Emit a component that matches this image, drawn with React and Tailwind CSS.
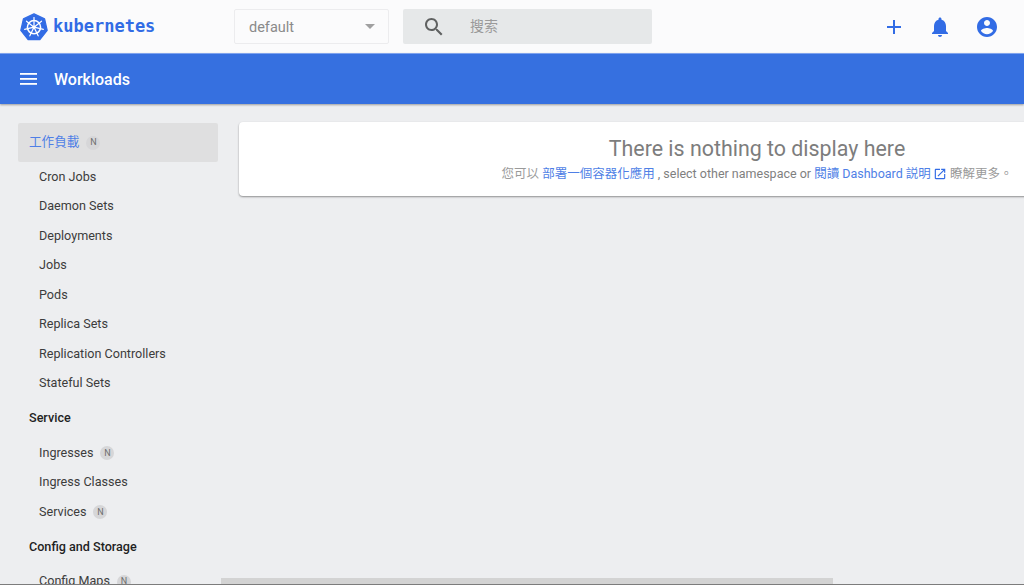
import React from 'react'

const cjk = '"Roboto", "Noto Sans CJK TC", sans-serif'

function KubeLogo() {
    const spokes = [0, 51.4, 102.8, 154.3, 205.7, 257.1, 308.6]
    return (
        <svg width="28" height="28" viewBox="0 0 28 28">
            <path d="M14 0.8 L24.6 5.9 L27.2 17.4 L19.9 26.6 L8.1 26.6 L0.8 17.4 L3.4 5.9 Z" fill="#326ce5" stroke="#326ce5" strokeWidth="1.2" strokeLinejoin="round" />
            <circle cx="14" cy="14.2" r="6.6" fill="none" stroke="#fff" strokeWidth="1.5" />
            <circle cx="14" cy="14.2" r="1.7" fill="#fff" />
            {spokes.map((a) => (
                <line key={a} x1="14" y1="14.2" x2="14" y2="4.6" stroke="#fff" strokeWidth="1.2" strokeLinecap="round" transform={`rotate(${a} 14 14.2)`} />
            ))}
        </svg>
    )
}

function Badge() {
    return (
        <span className="ml-[7px] flex h-[14px] w-[14px] items-center justify-center rounded-full bg-[#d6d6d8] text-[9px] text-[#6f6f6f]">
            N
        </span>
    )
}

function NavItem({ label, badge }) {
    return (
        <div className="flex h-[29.5px] items-center pl-[39px] text-[12.6px] text-[#3c3c3c]">
            <span>{label}</span>
            {badge && <Badge />}
        </div>
    )
}

function NavHeading({ label, className }) {
    return <div className={`flex items-center pl-[29px] text-[12.6px] font-medium text-[#1f1f1f] ${className}`}>{label}</div>
}

export default function App() {
    return (
        <div className="flex h-[585px] w-[1024px] flex-col overflow-hidden bg-[#edeef0]" style={{ fontFamily: cjk }}>
            <header className="flex h-[53px] shrink-0 items-center bg-[#fbfbfc]">
                <div className="ml-[20px] flex w-[214px] items-center gap-[5px]">
                    <KubeLogo />
                    <span className="pt-[1px] text-[17px] font-bold text-[#326ce5]" style={{ fontFamily: '"DejaVu Sans Mono", monospace' }}>kubernetes</span>
                </div>
                <div className="flex h-[35px] w-[155px] items-center justify-between rounded-[2px] border border-[#ececee] bg-[#fbfbfc] pl-[14px] pr-[13px] text-[14.5px] text-[#8a8a8a]">
                    <span className="pt-[2px]">default</span>
                    <span className="h-0 w-0 border-x-[5px] border-t-[5px] border-x-transparent border-t-[#a0a0a0]" />
                </div>
                <div className="ml-[14px] flex h-[35px] w-[249px] items-center rounded-[2px] bg-[#e6e8e9] pl-[19px] text-[14px] text-[#9a9a9a]">
                    <svg width="24" height="24" viewBox="0 0 24 24" fill="#5f6161">
                        <path d="M15.5 14h-.79l-.28-.27C15.41 12.59 16 11.11 16 9.5 16 5.91 13.09 3 9.5 3S3 5.91 3 9.5 5.91 16 9.5 16c1.61 0 3.09-.59 4.23-1.57l.27.28v.79l5 4.99L20.49 19l-4.99-5zm-6 0C7.01 14 5 11.99 5 9.5S7.01 5 9.5 5 14 7.01 14 9.5 11.99 14 9.5 14z" />
                    </svg>
                    <span className="ml-[24px]">搜索</span>
                </div>
                <div className="ml-auto flex items-center pr-[25px] text-[#326ce5]">
                    <svg width="24" height="24" viewBox="0 0 24 24" fill="currentColor">
                        <path d="M19 13h-6v6h-2v-6H5v-2h6V5h2v6h6v2z" />
                    </svg>
                    <svg className="ml-[22px]" width="24" height="24" viewBox="0 0 24 24" fill="currentColor">
                        <path d="M12 22c1.1 0 2-.9 2-2h-4c0 1.1.9 2 2 2zm6-6v-5c0-3.07-1.63-5.64-4.5-6.32V4c0-.83-.67-1.5-1.5-1.5s-1.5.67-1.5 1.5v.68C7.64 5.36 6 7.92 6 11v5l-2 2v1h16v-1l-2-2z" />
                    </svg>
                    <svg className="ml-[23px]" width="24" height="24" viewBox="0 0 24 24" fill="currentColor">
                        <path d="M12 2C6.48 2 2 6.48 2 12s4.48 10 10 10 10-4.48 10-10S17.52 2 12 2zm0 3c1.66 0 3 1.34 3 3s-1.34 3-3 3-3-1.34-3-3 1.34-3 3-3zm0 14.2c-2.5 0-4.71-1.28-6-3.22.03-1.99 4-3.08 6-3.08 1.99 0 5.97 1.09 6 3.08-1.29 1.94-3.5 3.22-6 3.22z" />
                    </svg>
                </div>
            </header>

            <div className="flex h-[51px] shrink-0 items-center border-t border-[#7fa3ee] bg-[#3670e0] pl-[20px] shadow-[0_1px_2px_rgba(0,0,0,0.35)]">
                <svg width="17" height="14" viewBox="0 0 17 14" fill="#fff">
                    <rect y="1" width="17" height="1.8" />
                    <rect y="6" width="17" height="1.8" />
                    <rect y="11" width="17" height="1.8" />
                </svg>
                <span className="ml-[17px] pt-[2px] text-[16px] font-medium text-white">Workloads</span>
            </div>

            <div className="relative flex min-h-0 flex-1">
                <nav className="w-[239px] shrink-0 overflow-hidden pt-[19px]">
                    <div className="ml-[18px] flex h-[39px] w-[200px] items-center rounded-[2px] bg-[#dfdfe0] pl-[11px] text-[12.6px] text-[#4f7fe6]">
                        <span>工作負載</span>
                        <Badge />
                    </div>
                    <div className="pt-[0.7px]">
                        {['Cron Jobs', 'Daemon Sets', 'Deployments', 'Jobs', 'Pods', 'Replica Sets', 'Replication Controllers', 'Stateful Sets'].map((label) => (
                            <NavItem key={label} label={label} />
                        ))}
                    </div>
                    <NavHeading label="Service" className="h-[40px]" />
                    <NavItem label="Ingresses" badge />
                    <NavItem label="Ingress Classes" />
                    <NavItem label="Services" badge />
                    <NavHeading label="Config and Storage" className="h-[40px]" />
                    <NavItem label="Config Maps" badge />
                </nav>

                <main className="min-w-0 flex-1 pt-[18px]">
                    {/* the card runs past the right edge of the window */}
                    <div className="flex h-[74px] w-[1036px] flex-col items-center rounded-l-[4px] bg-white pt-[13px] shadow-[0_1px_2px_rgba(0,0,0,0.4)]">
                        <div className="text-[21.4px] leading-[28px] text-[#7d7d7d]">There is nothing to display here</div>
                        <div className="mt-[2px] flex items-center whitespace-nowrap text-[12.5px] leading-[18px] text-[#9a9a9a]">
                            <span>您可以&nbsp;</span>
                            <span className="text-[#4f7fe6]">部署一個容器化應用</span>
                            <span className="text-[#7f7f7f]">&nbsp;, select other namespace or&nbsp;</span>
                            <span className="text-[#4f7fe6]">閱讀 Dashboard 説明</span>
                            <svg className="ml-[2px]" width="14" height="14" viewBox="0 0 24 24" fill="#326ce5">
                                <path d="M19 19H5V5h7V3H5c-1.11 0-2 .9-2 2v14c0 1.1.89 2 2 2h14c1.1 0 2-.9 2-2v-7h-2v7zM14 3v2h3.59l-9.83 9.83 1.41 1.41L19 6.41V10h2V3h-7z" />
                            </svg>
                            <span>&nbsp;瞭解更多。</span>
                        </div>
                    </div>
                </main>

                <div className="absolute bottom-0 left-[221px] h-[7px] w-[612px] bg-[#d3d3d3]" />
                <div className="absolute bottom-0 left-0 h-[1px] w-full bg-[#7c7c7c]" />
            </div>
        </div>
    )
}
